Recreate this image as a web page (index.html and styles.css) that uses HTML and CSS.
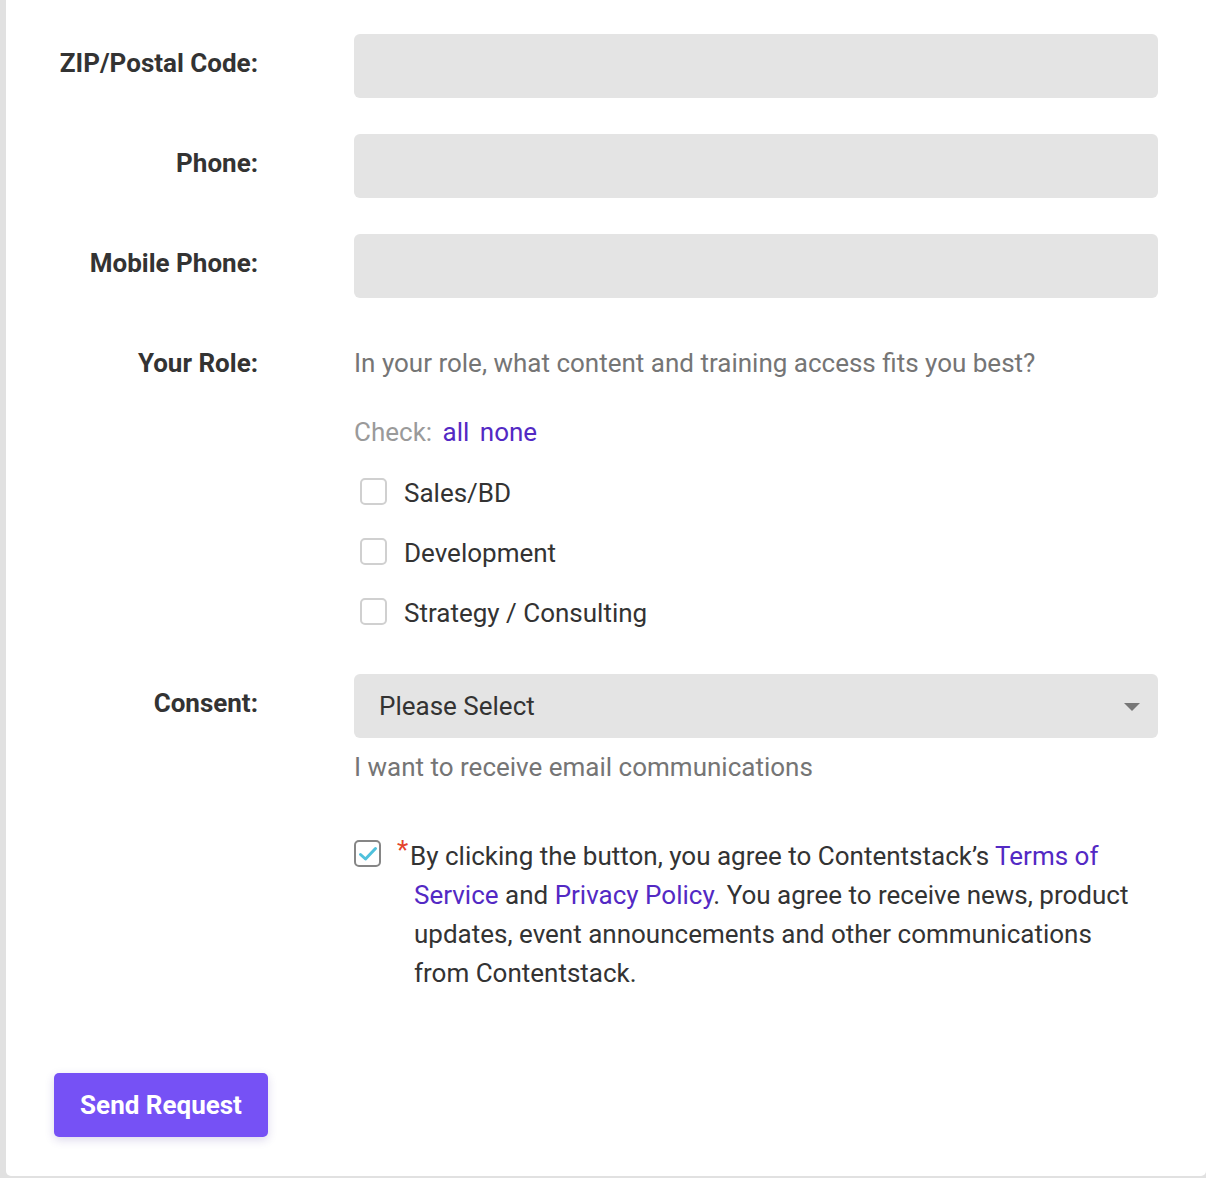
FILE: index.html
```html
<!DOCTYPE html>
<html lang="en">
<head>
<meta charset="utf-8">
<title>Request form</title>
<link rel="stylesheet" href="styles.css">
</head>
<body>
<div class="card">
  <form class="form">
    <label class="label">ZIP/Postal Code:</label>
    <div class="field"><div class="input"></div></div>

    <label class="label">Phone:</label>
    <div class="field"><div class="input"></div></div>

    <label class="label">Mobile Phone:</label>
    <div class="field"><div class="input"></div></div>

    <label class="label">Your Role:</label>
    <div class="field">
      <p class="desc">In your role, what content and training access fits you best?</p>
      <p class="check-line">Check: <a class="link" href="#">all</a> <a class="link" href="#">none</a></p>
      <div class="option"><span class="box"></span><span class="opt-text">Sales/BD</span></div>
      <div class="option"><span class="box"></span><span class="opt-text">Development</span></div>
      <div class="option"><span class="box"></span><span class="opt-text">Strategy / Consulting</span></div>
    </div>

    <label class="label label-consent">Consent:</label>
    <div class="field field-consent">
      <div class="select"><span>Please Select</span><span class="arrow"></span></div>
      <p class="hint">I want to receive email communications</p>
      <div class="agree">
        <span class="box checked"><svg width="20" height="16" viewBox="0 0 20 16"><path d="M2.5 8.5 L7.5 13 L17.5 2.5" fill="none" stroke="#4fc1dc" stroke-width="3" stroke-linecap="round" stroke-linejoin="round"/></svg></span>
        <p class="agree-text"><span class="req">*</span>By clicking the button, you agree to Contentstack’s <a class="link" href="#">Terms of Service</a> and <a class="link" href="#">Privacy Policy</a>. You agree to receive news, product updates, event announcements and other communications from Contentstack.</p>
      </div>
    </div>
  </form>
  <button class="send" type="button">Send Request</button>
</div>
</body>
</html>
```

FILE: styles.css
```css
html, body {
  margin: 0;
  padding: 0;
}
body {
  background: #e1e1e1;
  font-family: Roboto, "Liberation Sans", sans-serif;
  height: 1178px;
  overflow: hidden;
}
.card {
  margin-left: 6px;
  width: 1200px;
  height: 1176px;
  box-sizing: border-box;
  background: #fff;
  border-radius: 0 0 5px 5px;
  padding: 34px 0 0 0;
}
.form {
  display: grid;
  grid-template-columns: 252px 804px;
  column-gap: 96px;
  row-gap: 36px;
  margin: 0;
}
.label {
  text-align: right;
  font-weight: 700;
  font-size: 26px;
  line-height: 58px;
  color: #333;
}
.label-consent {
  margin-top: -3px;
}
.field {
  display: flex;
  flex-direction: column;
}
.input {
  height: 64px;
  background: #e4e4e4;
  border-radius: 6px;
}
.desc {
  margin: 0;
  font-size: 26px;
  line-height: 58px;
  color: #757575;
}
.check-line {
  margin: 22px 0 11px;
  font-size: 26px;
  line-height: 36px;
  color: #9a9a9a;
}
.link {
  color: #5329c4;
  text-decoration: none;
  margin-left: 4px;
}
.agree-text .link {
  margin-left: 0;
}
.option {
  display: flex;
  align-items: center;
  gap: 17px;
  height: 60px;
  padding-left: 6px;
  font-size: 26px;
  color: #333;
}
.opt-text {
  padding-top: 3px;
}
.box {
  width: 27px;
  height: 27px;
  box-sizing: border-box;
  border: 2px solid #d0d0d0;
  border-radius: 5px;
  background: #fff;
  flex: none;
}
.field-consent {
  margin-top: -3px;
}
.select {
  height: 64px;
  background: #e4e4e4;
  border-radius: 6px;
  display: flex;
  align-items: center;
  justify-content: space-between;
  padding: 0 18px 0 25px;
  font-size: 26px;
  color: #333;
}
.arrow {
  width: 0;
  height: 0;
  border-left: 8px solid transparent;
  border-right: 8px solid transparent;
  border-top: 8px solid #777;
  margin-top: 2px;
}
.hint {
  margin: 11px 0 0;
  font-size: 26px;
  line-height: 36px;
  color: #757575;
}
.agree {
  display: flex;
  align-items: flex-start;
  margin-top: 52px;
  gap: 33px;
}
.box.checked {
  border-color: #868686;
  display: flex;
  align-items: center;
  justify-content: center;
  margin-top: 3px;
}
.agree-text {
  position: relative;
  margin: 0;
  width: 726px;
  font-size: 26px;
  line-height: 39px;
  color: #333;
  text-indent: -4px;
}
.req {
  position: absolute;
  left: -17px;
  top: -6px;
  text-indent: 0;
  color: #e4432b;
  font-size: 26px;
}
.send {
  display: block;
  margin: 80px 0 0 48px;
  width: 214px;
  height: 64px;
  border: 0;
  border-radius: 5px;
  background: #7651f5;
  color: #fff;
  font-family: Roboto, "Liberation Sans", sans-serif;
  font-weight: 700;
  font-size: 26px;
  box-shadow: 0 3px 10px rgba(60, 40, 150, 0.18);
  cursor: pointer;
}
```
